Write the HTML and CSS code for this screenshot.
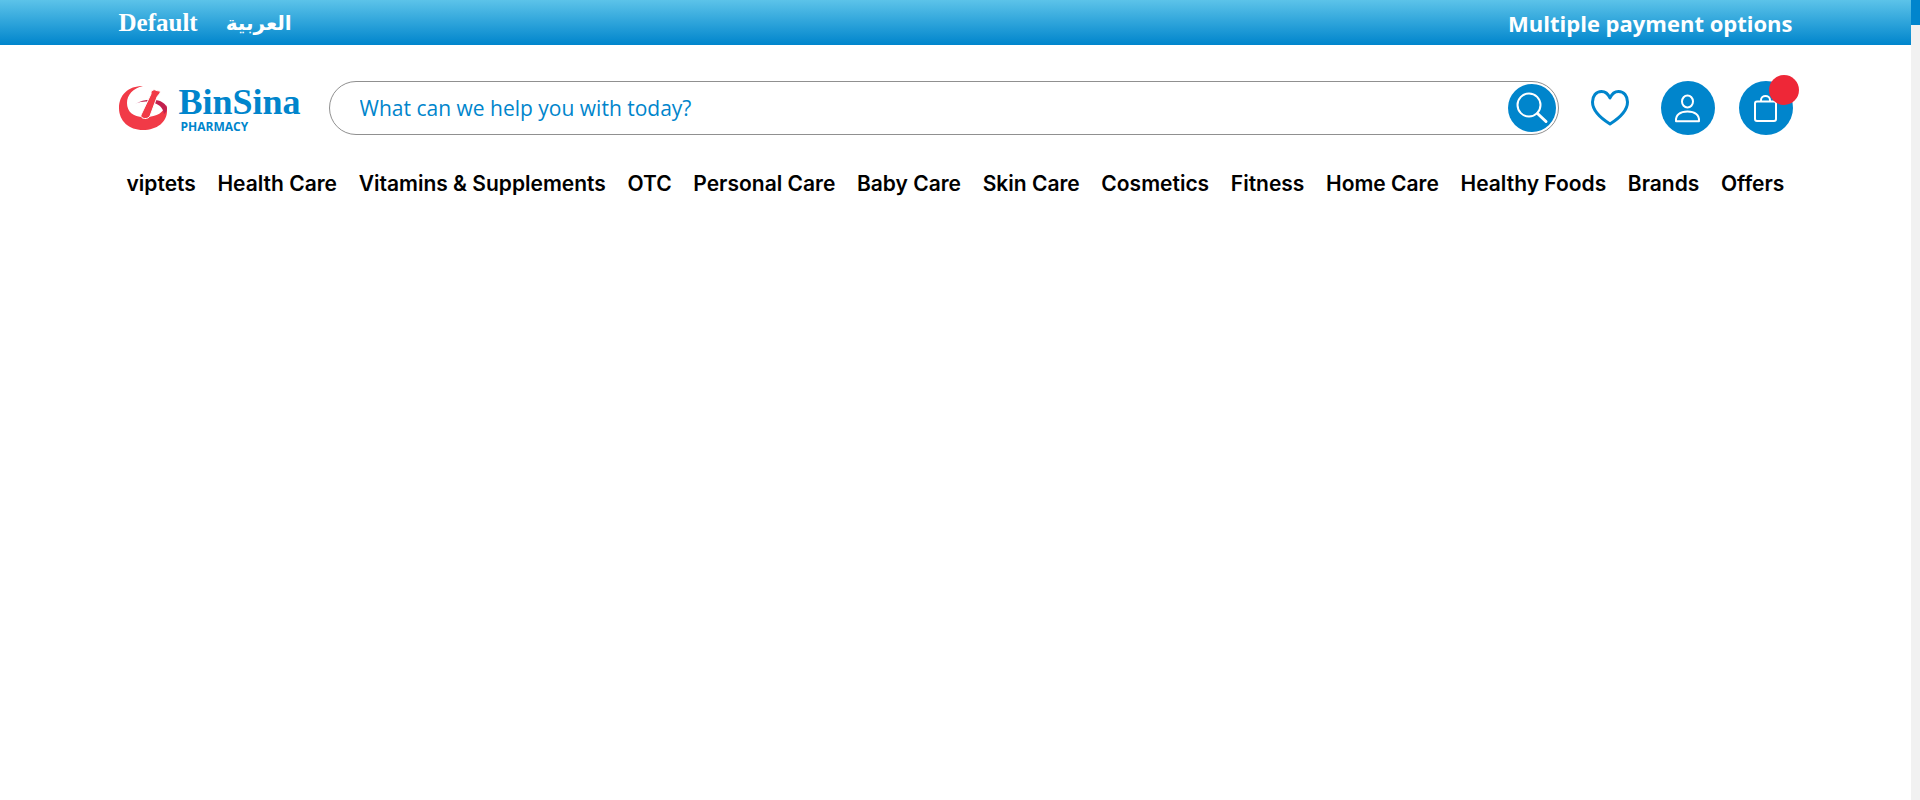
FILE: index.html
```html
<!DOCTYPE html>
<html lang="en">
<head>
<meta charset="utf-8">
<meta name="viewport" content="width=device-width, initial-scale=1">
<title>BinSina Pharmacy</title>
<link rel="stylesheet" href="styles.css">
</head>
<body>
<div class="page">
  <div class="topbar">
    <div class="container topbar-row">
      <nav class="languages" aria-label="Language">
        <a class="lang-default" href="#">Default</a>
        <a class="lang-arabic" href="#" lang="ar">العربية</a>
      </nav>
      <p class="promo">Multiple payment options</p>
    </div>
  </div>
  <header class="container header">
    <a class="logo" href="#" aria-label="BinSina Pharmacy">
      <svg class="logo-mark" viewBox="0 0 50 46" aria-hidden="true">
        <path d="M24 1C9 1 0 10 0 23c0 13 10 22 24 22 14 0 24-8 24-19 0-2 0-4-1-6-2 7-9 12-20 12C15 33 8 27 8 18 8 10 14 3 24 1z" fill="#f13a47"/>
        <path d="M16 19c6-4 14-5 21-4 6 1 10 4 11 8 0 3-1 4-3 6-1-6-4-9-10-11-6-2-12-2-19 1z" fill="#c2204e"/>
        <path d="M34 5c2-1 3 1 7 1 1 2-2 4-3 6L31 31c-2 4-10 3-9-1L32 9c0-2 0-3 2-4z" fill="#f13a47" stroke="#fff"/>
      </svg>
      <span class="logo-text">
        <span class="logo-name">BinSina</span>
        <span class="logo-kind">PHARMACY</span>
      </span>
    </a>
    <form class="search">
      <input class="search-input" type="text" aria-label="Search" placeholder="What can we help you with today?">
      <button class="search-button" type="button" aria-label="Search">
        <svg viewBox="0 0 48 48" aria-hidden="true"><circle cx="21" cy="21" r="11.5"/><path d="M29.5 29.5l8.500 8"/></svg>
      </button>
    </form>
    <div class="actions">
      <a class="wishlist" href="#" aria-label="Wishlist">
        <svg viewBox="0 0 38 36" aria-hidden="true"><path d="M19 8C17 3.500 14 1.500 10.500 1.500 5 1.500 1.500 6 1.500 12c0 9 8 16 17.500 22C28.500 28 36.500 21 36.500 12c0-6-3.500-10.500-9-10.500C24 1.500 21 3.500 19 8z"/></svg>
      </a>
      <a class="round" href="#" aria-label="Account">
        <svg viewBox="0 0 54 54" aria-hidden="true"><ellipse cx="26.500" cy="20.500" rx="5.500" ry="6"/><path d="M15 40.200c-.5-6 4-9.700 11.500-9.700S38.500 34.200 38 40.200z"/></svg>
      </a>
      <a class="round" href="#" aria-label="Cart">
        <svg viewBox="0 0 54 54" aria-hidden="true"><rect x="16" y="20.500" width="21" height="19.500" rx="2"/><path d="M22 20v-1c0-5.500 9-5.500 9 0v1"/></svg>
        <span class="badge"></span>
      </a>
    </div>
  </header>
  <nav class="container menu" aria-label="Categories">
    <a href="#">viptets</a>
    <a href="#">Health Care</a>
    <a href="#">Vitamins &amp; Supplements</a>
    <a href="#">OTC</a>
    <a href="#">Personal Care</a>
    <a href="#">Baby Care</a>
    <a href="#">Skin Care</a>
    <a href="#">Cosmetics</a>
    <a href="#">Fitness</a>
    <a href="#">Home Care</a>
    <a href="#">Healthy Foods</a>
    <a href="#">Brands</a>
    <a href="#">Offers</a>
  </nav>
</div>
<div class="scroll-track" aria-hidden="true"><div class="scroll-thumb"></div></div>
</body>
</html>
```
FILE: styles.css
```css
* { box-sizing: border-box; }
body {
  display: flex;
  min-height: 100vh;
  margin: 0;
  background: #fff;
  font-family: "Open Sans", "Noto Sans", sans-serif;
}
a { color: inherit; text-decoration: none; }
svg { display: block; }
.page { flex: 1; min-width: 0; }
.scroll-track { width: 9px; background: #f1f1f1; }
.scroll-thumb { height: 25px; background: #0085cd; }
.container {
  width: 100%;
  max-width: 1722px;
  margin: 0 auto;
  padding: 0 24px;
}
.topbar {
  background: linear-gradient(#5cc3e9, #0085cc);
  color: #fff;
  font-weight: 700;
}
.topbar-row {
  display: flex;
  align-items: center;
  justify-content: space-between;
  height: 45px;
}
.languages { display: flex; align-items: center; gap: 28px; }
.lang-default { font: 700 25px/32px "Liberation Serif", serif; }
.lang-arabic { font: 700 20px/32px "DejaVu Sans", sans-serif; }
.promo { margin: 0; font-size: 22px; line-height: 32px; }
.header {
  display: flex;
  align-items: center;
  padding-top: 36px;
}
.logo {
  display: flex;
  align-items: center;
  gap: 10px;
  margin-right: 28px;
  color: #0085cc;
}
.logo-mark { width: 50px; height: 46px; }
.logo-text { display: flex; flex-direction: column; }
.logo-name { font: 700 36px/38px "Liberation Serif", serif; }
.logo-kind { padding-left: 2px; font-size: 12px; font-weight: 700; line-height: 12px; }
.search {
  display: flex;
  flex: 1;
  align-items: center;
  height: 54px;
  padding-right: 2px;
  border: 1px solid #909090;
  border-radius: 27px;
}
.search-input {
  flex: 1;
  min-width: 0;
  height: 32px;
  padding: 0 30px;
  border: 0;
  outline: 0;
  background: none;
  color: #0085cc;
  font: 21px/32px "Open Sans", sans-serif;
}
.search-input::placeholder { color: #0085cc; opacity: 1; }
.search-button {
  width: 48px;
  height: 48px;
  padding: 0;
  border: 0;
  border-radius: 50%;
  background: #0085cc;
}
.search-button svg, .round svg { fill: none; stroke: #fff; stroke-width: 2; stroke-linejoin: round; stroke-linecap: round; }
.search-button path { stroke-width: 3; }
.actions { display: flex; align-items: center; gap: 24px; margin-left: 32px; }
.wishlist { margin-right: 8px; }
.wishlist svg { width: 38px; height: 36px; fill: none; stroke: #0085cc; stroke-width: 3; stroke-linejoin: round; }
.round {
  position: relative;
  width: 54px;
  height: 54px;
  border-radius: 50%;
  background: #0085cc;
}
.badge {
  position: absolute;
  top: -6px;
  right: -6px;
  width: 30px;
  height: 30px;
  border-radius: 50%;
  background: #ee2737;
}
.menu {
  display: flex;
  justify-content: space-between;
  padding: 0 32px;
  margin-top: 33px;
  color: #000;
  font: 600 21px/32px Inter, sans-serif;
  white-space: nowrap;
}
```
